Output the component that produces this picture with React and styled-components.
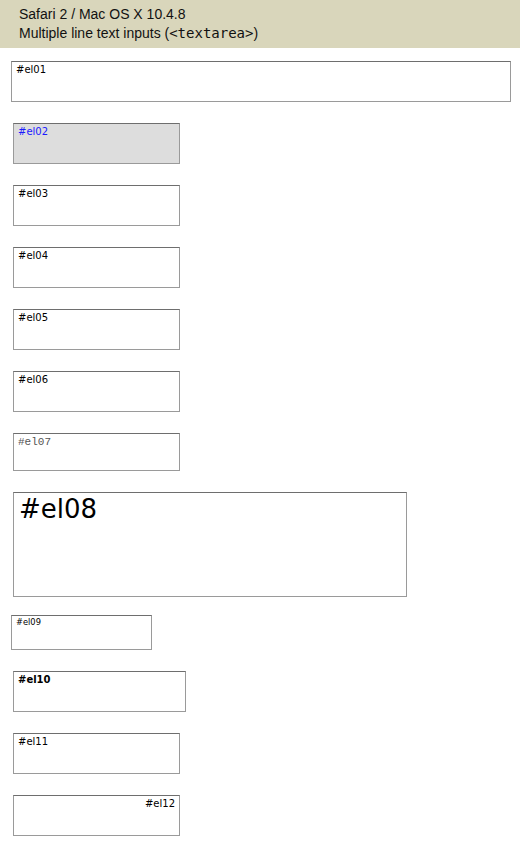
import React from "react";
import styled, { createGlobalStyle } from "styled-components";

const GlobalStyle = createGlobalStyle`
  body {
    margin: 0;
    background: #fff;
    font-family: "Liberation Sans", Arial, sans-serif;
  }
`;

const Header = styled.header`
  background: #d9d6bb;
  padding: 5px 19px 4px;
  height: 48px;
  box-sizing: border-box;
  color: #111;
  font-size: 14px;
  line-height: 19px;
`;

const Line = styled.div`
  white-space: nowrap;
`;

const Code = styled.span`
  font-family: "DejaVu Sans Mono", monospace;
  font-size: 14px;
`;

const Form = styled.div`
  display: flex;
  flex-direction: column;
  align-items: flex-start;
  gap: 21px;
  padding-top: 13px;
`;

const Area = styled.textarea`
  display: block;
  box-sizing: border-box;
  width: ${(p) => p.$w || 167}px;
  height: ${(p) => p.$h || 41}px;
  margin: ${(p) => p.$top || 0}px 0 0 ${(p) => p.$left || 13}px;
  padding: ${(p) => p.$pad || "2px 4px"};
  border: 1px solid #9a9a9a;
  border-top-color: #6e6e6e;
  background: ${(p) => p.$bg || "#fff"};
  color: ${(p) => p.$color || "#000"};
  font-family: ${(p) => p.$mono ? '"Liberation Mono", monospace' : '"DejaVu Sans", sans-serif'};
  font-size: ${(p) => p.$size || 10}px;
  font-weight: ${(p) => (p.$bold ? 700 : 400)};
  text-align: ${(p) => p.$align || "left"};
  line-height: normal;
  resize: none;
  overflow: hidden;
  outline: none;
`;

// one entry per textarea, only what differs from the default box
const fields = [
  { id: "el01", $w: 500, $left: 11 },
  { id: "el02", $bg: "#dddddd", $color: "#1a1aff" },
  { id: "el03" },
  { id: "el04" },
  { id: "el05" },
  { id: "el06" },
  { id: "el07", $h: 38, $mono: true, $size: 11, $color: "#555" },
  { id: "el08", $w: 394, $h: 105, $size: 26, $pad: "1px 5px" },
  { id: "el09", $w: 141, $h: 35, $left: 11, $top: -3, $size: 8.3, $pad: "1px 4px" },
  { id: "el10", $w: 173, $bold: true },
  { id: "el11" },
  { id: "el12", $align: "right" },
];

export default function App() {
  return (
    <>
      <GlobalStyle />
      <Header>
        <Line>Safari 2 / Mac OS X 10.4.8</Line>
        <Line>
          Multiple line text inputs (<Code>&lt;textarea&gt;</Code>)
        </Line>
      </Header>
      <Form>
        {fields.map(({ id, ...rest }) => (
          <Area key={id} id={id} readOnly defaultValue={"#" + id} {...rest} />
        ))}
      </Form>
    </>
  );
}
